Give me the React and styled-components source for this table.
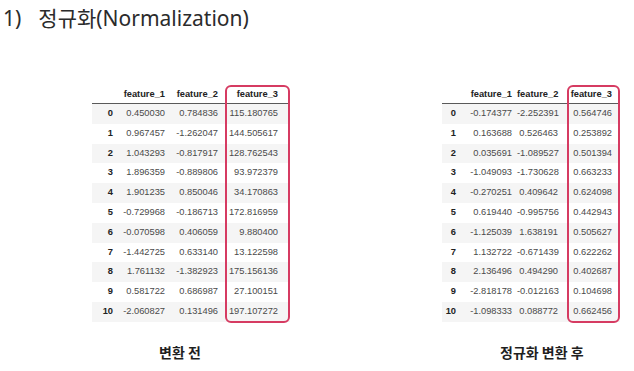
import styled, { createGlobalStyle } from 'styled-components';

const GlobalStyle = createGlobalStyle`
  html, body {
    margin: 0;
    padding: 0;
    background: #ffffff;
  }
`;

const Page = styled.div`
  width: 634px;
  height: 371px;
  overflow: hidden;
  background: #ffffff;
  font-family: 'Noto Sans', 'Noto Sans CJK KR', sans-serif;
`;

const Title = styled.h1`
  margin: 0;
  padding: 4px 0 0 3px;
  font-size: 21px;
  font-weight: 400;
  line-height: 28px;
  color: #2b2b2b;
  display: flex;
`;

const Number = styled.span`
  margin-right: 17px;
`;

const Panels = styled.div`
  display: flex;
  margin-top: 53px;
`;

const Panel = styled.div`
  display: flex;
  flex-direction: column;
  margin-left: ${(p) => p.$left}px;
`;

const Table = styled.div`
  display: flex;
  font-family: 'Liberation Sans', Arial, sans-serif;
  font-size: 9.3px;
`;

const Column = styled.div`
  position: relative;
  display: flex;
  flex-direction: column;
  width: ${(p) => p.$width}px;

  ${(p) =>
    p.$highlight &&
    `
    &::after {
      content: '';
      position: absolute;
      inset: 0 0 -1px 0;
      border: 2px solid #d63b62;
      border-radius: 6px;
    }
  `}
`;

const HeadCell = styled.div`
  height: 18px;
  line-height: 18px;
  border-bottom: 1px solid #5a5a5a;
  text-align: right;
  padding-right: ${(p) => p.$pad}px;
  font-weight: 700;
  color: #222;
  white-space: nowrap;
`;

const Cell = styled.div`
  height: 19.8px;
  line-height: 19.8px;
  text-align: right;
  padding-right: ${(p) => p.$pad}px;
  background: ${(p) => (p.$striped ? '#f5f5f5' : '#ffffff')};
  color: ${(p) => (p.$index ? '#222' : '#4a4a4a')};
  font-weight: ${(p) => (p.$index ? 700 : 400)};
  white-space: nowrap;
`;

const Caption = styled.div`
  margin-top: 20px;
  padding-left: ${(p) => p.$offset}px;
  font-family: 'Noto Sans CJK KR', sans-serif;
  font-size: 14px;
  font-weight: 700;
  line-height: 20px;
  color: #1f1f1f;
`;

const before = {
  f1: ['0.450030', '0.967457', '1.043293', '1.896359', '1.901235', '-0.729968', '-0.070598', '-1.442725', '1.761132', '0.581722', '-2.060827'],
  f2: ['0.784836', '-1.262047', '-0.817917', '-0.889806', '0.850046', '-0.186713', '0.406059', '0.633140', '-1.382923', '0.686987', '0.131496'],
  f3: ['115.180765', '144.505617', '128.762543', '93.972379', '34.170863', '172.816959', '9.880400', '13.122598', '175.156136', '27.100151', '197.107272'],
};

const after = {
  f1: ['-0.174377', '0.163688', '0.035691', '-1.049093', '-0.270251', '0.619440', '-1.125039', '1.132722', '2.136496', '-2.818178', '-1.098333'],
  f2: ['-2.252391', '0.526463', '-1.089527', '-1.730628', '0.409642', '-0.995756', '1.638191', '-0.671439', '0.494290', '-0.012163', '0.088772'],
  f3: ['0.564746', '0.253892', '0.501394', '0.663233', '0.624098', '0.442943', '0.505627', '0.622262', '0.402687', '0.104698', '0.662456'],
};

const indexes = Array.from({ length: 11 }, (_, i) => String(i));

const DataTable = ({ data, widths, pads }) => {
  const columns = [
    { head: '', values: indexes, index: true },
    { head: 'feature_1', values: data.f1 },
    { head: 'feature_2', values: data.f2 },
    { head: 'feature_3', values: data.f3, highlight: true },
  ];

  return (
    <Table>
      {columns.map((col, c) => (
        <Column key={c} $width={widths[c]} $highlight={col.highlight}>
          <HeadCell $pad={pads[c]}>{col.head}</HeadCell>
          {col.values.map((v, r) => (
            <Cell key={r} $pad={pads[c]} $striped={r % 2 === 0} $index={col.index}>
              {v}
            </Cell>
          ))}
        </Column>
      ))}
    </Table>
  );
};

const App = () => (
  <Page>
    <GlobalStyle />
    <Title>
      <Number>1)</Number>
      정규화(Normalization)
    </Title>
    <Panels>
      <Panel $left={92}>
        <DataTable data={before} widths={[26, 52, 55, 65]} pads={[5, 5, 7, 12]} />
        <Caption $offset={67}>변환 전</Caption>
      </Panel>
      <Panel $left={152}>
        <DataTable data={after} widths={[18, 57, 50, 53]} pads={[4, 5, 9, 8]} />
        <Caption $offset={58}>정규화 변환 후</Caption>
      </Panel>
    </Panels>
  </Page>
);

export default App;
